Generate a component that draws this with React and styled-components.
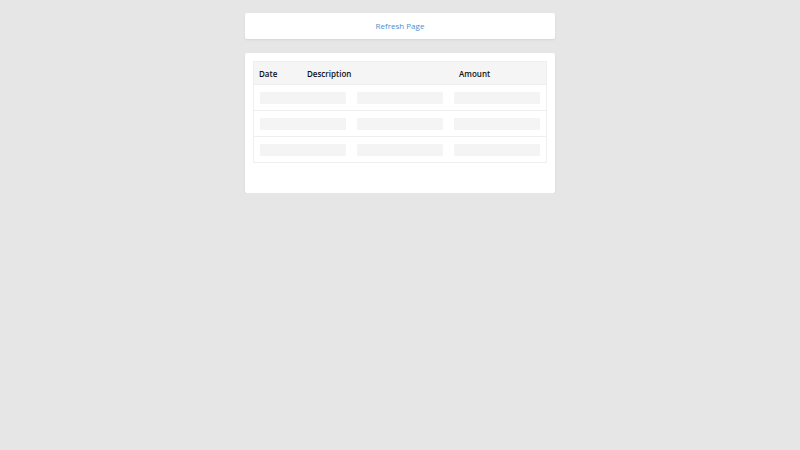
import styled, { createGlobalStyle } from "styled-components";

const GlobalStyle = createGlobalStyle`
  html, body {
    margin: 0;
    padding: 0;
    background: #e6e6e6;
    font-family: "Open Sans", "Liberation Sans", sans-serif;
  }
`;

const Page = styled.div`
  width: 310px;
  margin: 0 auto;
  padding-top: 13px;
  display: flex;
  flex-direction: column;
  gap: 14px;
`;

const Card = styled.div`
  background: #fff;
  border-radius: 2px;
  box-shadow: 0 1px 2px rgba(0, 0, 0, 0.08);
  box-sizing: border-box;
  padding: ${(p) => p.$pad || "0"};
`;

const RefreshLink = styled.a`
  display: block;
  height: 26px;
  line-height: 26px;
  text-align: center;
  font-size: 8px;
  color: #4a90d0;
  text-decoration: none;
  cursor: pointer;
`;

const Table = styled.div`
  border: 1px solid #efefef;
`;

const HeaderRow = styled.div`
  display: grid;
  grid-template-columns: 48px 152px 1fr;
  height: 22px;
  align-items: center;
  background: #f5f5f5;
  padding-left: 5px;
  font-size: 8px;
  font-weight: 600;
  color: #111;
`;

const Row = styled.div`
  display: grid;
  grid-template-columns: repeat(3, 1fr);
  height: 26px;
  align-items: center;
  border-top: 1px solid #efefef;
  box-sizing: border-box;
`;

const Bar = styled.div`
  width: 86px;
  height: 12px;
  justify-self: center;
  background: #f4f4f4;
  border-radius: 1px;
`;

export default function App() {
  const rows = [0, 1, 2];
  return (
    <>
      <GlobalStyle />
      <Page>
        <Card>
          <RefreshLink>Refresh Page</RefreshLink>
        </Card>
        <Card $pad="8px 8px 30px">
          <Table>
            <HeaderRow>
              <div>Date</div>
              <div>Description</div>
              <div>Amount</div>
            </HeaderRow>
            {rows.map((r) => (
              <Row key={r}>
                <Bar />
                <Bar />
                <Bar />
              </Row>
            ))}
          </Table>
        </Card>
      </Page>
    </>
  );
}
